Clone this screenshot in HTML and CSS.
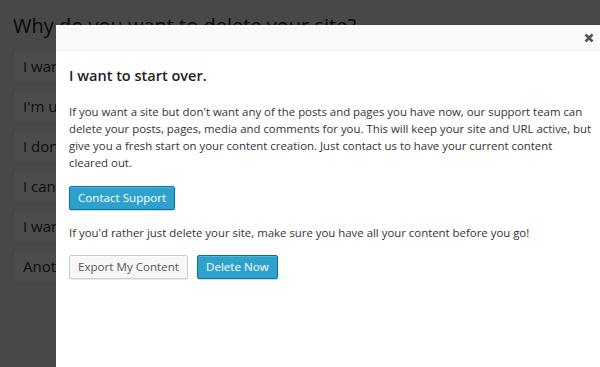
FILE: index.html
```html
<!DOCTYPE html>
<html lang="en">
<head>
    <meta charset="UTF-8">
    <meta name="viewport" content="width=device-width, initial-scale=1.0">
    <title>Delete Site</title>
    <link rel="stylesheet" href="styles.css">
</head>
<body>
    <div class="page">
        <h1>Why do you want to delete your site?</h1>
        <ul class="reasons">
            <li class="reason">I want to start over.</li>
            <li class="reason">I'm using another site.</li>
            <li class="reason">I don't need it anymore.</li>
            <li class="reason">I can't figure out how to use it.</li>
            <li class="reason">I want a different address.</li>
            <li class="reason">Another reason.</li>
        </ul>
    </div>

    <div class="backdrop"></div>

    <div class="dialog">
        <div class="dialog-header">
            <button type="button" class="dialog-close" aria-label="Close">
                <svg width="10" height="10" viewBox="0 0 10 10">
                    <path d="M1.5 1.5 L8.5 8.5 M8.5 1.5 L1.5 8.5" stroke="#555" stroke-width="2.6" stroke-linecap="butt"/>
                </svg>
            </button>
        </div>
        <div class="dialog-body">
            <h2>I want to start over.</h2>
            <p>If you want a site but don't want any of the posts and pages you have now, our support team can delete your posts, pages, media and comments for you. This will keep your site and URL active, but give you a fresh start on your content creation. Just contact us to have your current content cleared out.</p>
            <button type="button" class="button button-primary">Contact Support</button>
            <p>If you'd rather just delete your site, make sure you have all your content before you go!</p>
            <div class="actions">
                <button type="button" class="button">Export My Content</button>
                <button type="button" class="button button-primary">Delete Now</button>
            </div>
        </div>
    </div>
</body>
</html>
```

FILE: styles.css
```css
body {
    font-family: "Open Sans", Arial, sans-serif;
    background-color: #f1f1f1;
    margin: 0;
    padding: 0;
    overflow: hidden;
}

.page {
    padding: 12px 13px;
}

h1 {
    margin: 0 0 10px;
    font-size: 20px;
    font-weight: 400;
    line-height: 28px;
    color: #222;
}

.reasons {
    list-style: none;
    margin: 0;
    padding: 0;
}

.reason {
    height: 33px;
    margin-bottom: 7px;
    padding: 0 9px;
    background-color: #fff;
    border: 1px solid #e5e5e5;
    box-sizing: border-box;
    font-size: 15px;
    line-height: 31px;
    color: #333;
}

.backdrop {
    position: fixed;
    inset: 0;
    background-color: rgba(0, 0, 0, 0.7);
}

.dialog {
    position: fixed;
    top: 25px;
    left: 56px;
    right: 0;
    bottom: 0;
    background-color: #fff;
}

.dialog-header {
    height: 25px;
    background-color: #fafafa;
    border-bottom: 1px solid #eee;
    display: flex;
    justify-content: flex-end;
    align-items: center;
    padding-right: 6px;
}

.dialog-close {
    display: flex;
    background: none;
    border: none;
    padding: 0;
    cursor: pointer;
}

.dialog-body {
    padding: 14px 8px 14px 13px;
}

h2 {
    margin: 0 0 16px;
    font-size: 14.5px;
    font-weight: 600;
    line-height: 22px;
    color: #222;
}

p {
    margin: 0 0 14px;
    font-size: 11.4px;
    line-height: 17px;
    color: #333;
}

.button {
    height: 24px;
    padding: 0 8px;
    margin: 0 0 14px;
    font-family: inherit;
    font-size: 11.6px;
    line-height: 22px;
    color: #555;
    background-color: #f7f7f7;
    border: 1px solid #ccc;
    border-radius: 2px;
    box-shadow: inset 0 1px 0 #fff, 0 1px 0 rgba(0, 0, 0, 0.08);
    cursor: pointer;
}

.button-primary {
    color: #fff;
    background-color: #2ea2cc;
    border-color: #0074a2;
    box-shadow: inset 0 1px 0 rgba(120, 200, 230, 0.5), 0 1px 0 rgba(0, 0, 0, 0.15);
}

.actions {
    display: flex;
    gap: 9px;
    margin-top: 3px;
}
```
